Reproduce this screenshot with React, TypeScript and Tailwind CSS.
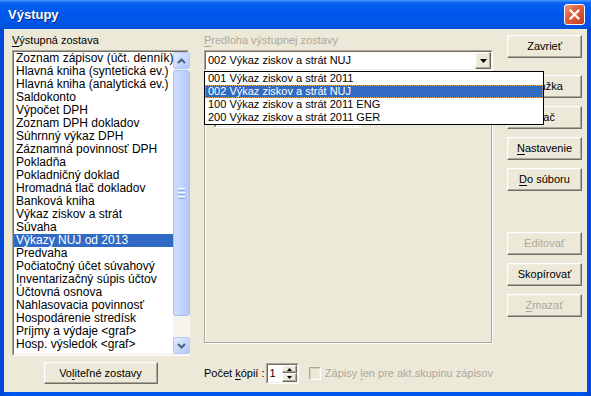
import React from "react";

const reports = [
  "Zoznam zápisov (účt. denník)",
  "Hlavná kniha (syntetická ev.)",
  "Hlavná kniha (analytická ev.)",
  "Saldokonto",
  "Výpočet DPH",
  "Zoznam DPH dokladov",
  "Súhrnný výkaz DPH",
  "Záznamná povinnosť DPH",
  "Pokladňa",
  "Pokladničný doklad",
  "Hromadná tlač dokladov",
  "Banková kniha",
  "Výkaz ziskov a strát",
  "Súvaha",
  "Výkazy NUJ od 2013",
  "Predvaha",
  "Počiatočný účet súvahový",
  "Inventarizačný súpis účtov",
  "Účtovná osnova",
  "Nahlasovacia povinnosť",
  "Hospodárenie stredísk",
  "Príjmy a výdaje <graf>",
  "Hosp. výsledok <graf>",
];

const templates = [
  "001 Výkaz ziskov a strát 2011",
  "002 Výkaz ziskov a strát NUJ",
  "100 Výkaz ziskov a strát 2011 ENG",
  "200 Výkaz ziskov a strát 2011 GER",
];

// classic raised 3d frame
const raised =
  "bg-[#ECE9D8] border border-t-white border-l-white border-r-[#716F64] border-b-[#716F64] shadow-[inset_-1px_-1px_0_#ACA899,inset_1px_1px_0_#F1EFE2]";

function Sunken({ className = "", children }: { className?: string; children?: React.ReactNode }) {
  return (
    <div className={`border border-t-[#ACA899] border-l-[#ACA899] border-b-white border-r-white ${className}`}>
      <div className="h-full w-full border border-t-[#716F64] border-l-[#716F64] border-b-[#F1EFE2] border-r-[#F1EFE2] bg-white flex">
        {children}
      </div>
    </div>
  );
}

function Btn({ children, disabled, className = "" }: { children: React.ReactNode; disabled?: boolean; className?: string }) {
  return (
    <div
      className={`h-[23px] w-[75px] flex items-center justify-center ${raised} ${disabled ? "text-[#ACA899]" : "text-black"} ${className}`}
    >
      {children}
    </div>
  );
}

function U({ children }: { children: React.ReactNode }) {
  return <span className="underline underline-offset-[2px] decoration-1">{children}</span>;
}

function ArrowBtn({ dir }: { dir: "up" | "down" }) {
  return (
    <div className="h-[17px] w-[17px] rounded-[2px] border border-[#B7CAF5] bg-[linear-gradient(135deg,#E3ECFE_0%,#C6D6FC_60%,#B2C6F4_100%)] flex items-center justify-center">
      <svg width="9" height="6" viewBox="0 0 9 6">
        {dir === "up" ? (
          <path d="M1 5 L4.5 1.5 L8 5" fill="none" stroke="#4D6185" strokeWidth="2" />
        ) : (
          <path d="M1 1 L4.5 4.5 L8 1" fill="none" stroke="#4D6185" strokeWidth="2" />
        )}
      </svg>
    </div>
  );
}

function Scrollbar() {
  return (
    <div className="w-[17px] h-full flex flex-col bg-[#F5F4EE]">
      <ArrowBtn dir="up" />
      <div className="mt-[1px] h-[246px] rounded-[3px] border border-[#A9BFF0] bg-[linear-gradient(to_right,#CFDCFC_0%,#C3D4FC_50%,#B6CAF8_100%)] flex flex-col items-center justify-center gap-[1px]">
        <div className="w-[7px] h-[1px] bg-white" />
        <div className="w-[7px] h-[1px] bg-[#8DAEF5]" />
        <div className="w-[7px] h-[1px] bg-white" />
        <div className="w-[7px] h-[1px] bg-[#8DAEF5]" />
        <div className="w-[7px] h-[1px] bg-white" />
        <div className="w-[7px] h-[1px] bg-[#8DAEF5]" />
      </div>
      <div className="flex-1" />
      <ArrowBtn dir="down" />
    </div>
  );
}

function DropArrow({ className = "" }: { className?: string }) {
  return (
    <div className={`w-[16px] h-[17px] flex items-center justify-center ${raised} ${className}`}>
      <svg width="7" height="4" viewBox="0 0 7 4">
        <path d="M0 0 H7 L3.5 4 Z" fill="#000" />
      </svg>
    </div>
  );
}

export default function App() {
  return (
    <div className="w-[591px] h-[396px] flex flex-col bg-[linear-gradient(to_right,#0046D8_0%,#0058EE_2%,#0058EE_98%,#0046D8_100%)] font-['Liberation_Sans',Arial,sans-serif] text-[11px] leading-[13px] text-black overflow-hidden">
      {/* Title bar */}
      <div className="h-[29px] shrink-0 flex items-center justify-between pl-[8px] pr-[6px] bg-[linear-gradient(to_bottom,#4A9BFF_0%,#0A62F2_10%,#0058EE_35%,#0056E8_75%,#0050DC_100%)]">
        <span className="text-white font-bold text-[13px] leading-[16px] [text-shadow:1px_1px_0_#0A2A8E]">Výstupy</span>
        <div className="w-[21px] h-[21px] rounded-[3px] border border-white bg-[linear-gradient(135deg,#F09A7E_0%,#E0603F_40%,#C83C1C_100%)] flex items-center justify-center">
          <svg width="11" height="11" viewBox="0 0 11 11">
            <path d="M1.5 1.5 L9.5 9.5 M9.5 1.5 L1.5 9.5" stroke="#fff" strokeWidth="2.2" strokeLinecap="square" />
          </svg>
        </div>
      </div>

      {/* Client area */}
      <div className="flex-1 mx-[4px] mb-[4px] bg-[#ECE9D8] flex pl-[8px] pt-[5px]">
        {/* Left column */}
        <div className="w-[177px] flex flex-col">
          <div className="h-[13px] whitespace-nowrap">
            <U>V</U>ýstupná zostava
          </div>
          <Sunken className="mt-[3px] h-[306px]">
            <div className="flex-1 flex flex-col text-[12px]">
              {reports.map((r, i) => (
                <div
                  key={r}
                  className={`h-[13px] leading-[13px] pl-[2px] whitespace-nowrap ${i === 14 ? "bg-[#316AC5] text-white" : ""}`}
                >
                  {r}
                </div>
              ))}
            </div>
            <Scrollbar />
          </Sunken>
          <div className={`mt-[6px] self-center w-[114px] h-[22px] flex items-center justify-center ${raised}`}>
            Vo<U>l</U>iteľné zostavy
          </div>
        </div>

        {/* Middle column */}
        <div className="ml-[15px] w-[289px] flex flex-col">
          <div className="h-[13px] whitespace-nowrap text-[#ACA899]">
            <U>P</U>redloha výstupnej zostavy
          </div>
          <div className="relative mt-[3px] h-[21px]">
            <Sunken className="h-full">
              <div className="flex-1 pl-[2px] flex items-center whitespace-nowrap">002 Výkaz ziskov a strát NUJ</div>
              <DropArrow />
            </Sunken>
            <div className="absolute z-20 left-0 top-[21px] w-[340px] border border-black bg-white">
              {templates.map((t, i) => (
                <div
                  key={t}
                  className={`h-[13px] pl-[3px] whitespace-nowrap ${
                    i === 1 ? "bg-[#316AC5] text-white outline outline-1 outline-dotted outline-[#E0B060] -outline-offset-1" : ""
                  }`}
                >
                  {t}
                </div>
              ))}
            </div>
          </div>

          {/* group box behind the open list */}
          <div className="mt-[8px] w-[288px] h-[264px] border border-[#ACA899] shadow-[inset_1px_1px_0_#fff,1px_1px_0_#fff] pl-[9px] pt-[24px]">
            <Sunken className="w-[147px] h-[24px]">
              <div className="flex-1" />
              <DropArrow className="mt-[1px]" />
            </Sunken>
          </div>

          {/* copies row */}
          <div className="mt-[20px] h-[21px] flex items-center">
            <span className="whitespace-nowrap">
              Počet <U>k</U>ópií :
            </span>
            <Sunken className="ml-[1px] w-[35px] h-[21px]">
              <div className="flex-1 pl-[2px] flex items-center">1</div>
              <div className="w-[15px] flex flex-col">
                <div className={`h-[8px] flex items-center justify-center ${raised}`}>
                  <svg width="5" height="3" viewBox="0 0 5 3">
                    <path d="M0 3 H5 L2.5 0 Z" fill="#000" />
                  </svg>
                </div>
                <div className={`h-[9px] flex items-center justify-center ${raised}`}>
                  <svg width="5" height="3" viewBox="0 0 5 3">
                    <path d="M0 0 H5 L2.5 3 Z" fill="#000" />
                  </svg>
                </div>
              </div>
            </Sunken>
            <div className="ml-[10px] w-[13px] h-[13px] border border-t-[#ACA899] border-l-[#ACA899] border-b-white border-r-white">
              <div className="h-full w-full border border-t-[#D6D3C5] border-l-[#D6D3C5] border-b-[#F1EFE2] border-r-[#F1EFE2]" />
            </div>
            <span className="ml-[4px] whitespace-nowrap text-[#ACA899]">
              Zápisy <U>l</U>en pre akt.skupinu zápisov
            </span>
          </div>
        </div>

        {/* Right column */}
        <div className="ml-[14px] w-[75px] flex flex-col">
          <Btn className="mt-[1px]">Zavrieť</Btn>
          <Btn className="mt-[17px]">Ukážka</Btn>
          <Btn className="mt-[8px]">Tlač</Btn>
          <Btn className="mt-[8px]">
            <U>N</U>astavenie
          </Btn>
          <Btn className="mt-[8px]">
            <U>D</U>o súboru
          </Btn>
          <Btn className="mt-[41px]" disabled>
            Editovať
          </Btn>
          <Btn className="mt-[8px]">Skopírovať</Btn>
          <Btn className="mt-[8px]" disabled>
            <U>Z</U>mazať
          </Btn>
        </div>
      </div>
    </div>
  );
}
